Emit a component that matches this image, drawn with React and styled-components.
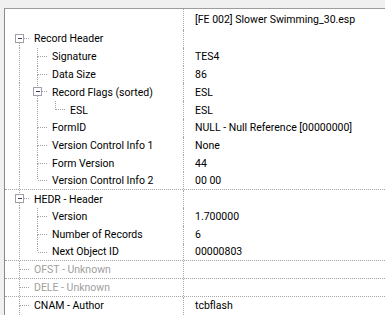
import React from 'react'
import styled, { createGlobalStyle } from 'styled-components'

const GlobalStyle = createGlobalStyle`
  html, body {
    margin: 0;
    padding: 0;
    background: #f0f0f0;
    overflow: hidden;
  }
`

const Container = styled.div`
  height: 315px;
  padding: 8px 0 0 4px;
  box-sizing: border-box;
  font-family: Roboto, "Open Sans", sans-serif;
  font-size: 10.5px;
  color: #000;
`

const Panel = styled.div`
  height: 100%;
  background: #fff;
  border-top: 1px solid #9c9c9c;
  border-left: 1px solid #8a8a8a;
  overflow: hidden;
`

const Row = styled.div`
  display: grid;
  grid-template-columns: 179px 1fr;
  grid-template-rows: 100%;
  height: ${p => (p.$head ? '21px' : '17.8px')};
  box-sizing: border-box;
  border-bottom: ${p => (p.$sep ? '1px dotted #a6a6a6' : 'none')};
`

const NameCell = styled.div`
  display: flex;
  align-items: stretch;
  height: 100%;
  min-height: 0;
  padding-left: 5px;
  border-right: 1px dotted #a6a6a6;
  overflow: hidden;
`

const Label = styled.span`
  display: flex;
  align-items: center;
  padding-left: 6px;
  white-space: nowrap;
  color: ${p => (p.$muted ? '#a0a0a0' : '#000')};
`

const ValueCell = styled.div`
  display: flex;
  align-items: center;
  padding-left: 11px;
  white-space: nowrap;
  min-height: 0;
`

const Gutter = styled.svg`
  flex: none;
  width: 18px;
  height: 100%;
  overflow: visible;
`

const dash = { stroke: '#a0a0a0', strokeWidth: 1, strokeDasharray: '1 1', shapeRendering: 'crispEdges' }

const Guide = ({ on }) => (
  <Gutter>
    {on && <line x1="9.5" y1="0" x2="9.5" y2="100%" style={dash} />}
  </Gutter>
)

const Connector = ({ up, down, box }) => (
  <Gutter>
    {up && <line x1="9.5" y1="0" x2="9.5" y2="50%" style={dash} />}
    {down && <line x1="9.5" y1="50%" x2="9.5" y2="100%" style={dash} />}
    <line x1={box ? 14 : 9.5} y1="50%" x2="20" y2="50%" style={dash} />
    {box && (
      <svg y="50%" overflow="visible">
        <rect x="5.5" y="-4.5" width="8" height="8" fill="#fff" stroke="#a0a0ac" shapeRendering="crispEdges" />
        <line x1="7.5" y1="-0.5" x2="12" y2="-0.5" stroke="#3c3c64" shapeRendering="crispEdges" />
      </svg>
    )}
  </Gutter>
)

const tree = [
  {
    label: 'Record Header',
    children: [
      { label: 'Signature', value: 'TES4' },
      { label: 'Data Size', value: '86' },
      { label: 'Record Flags (sorted)', value: 'ESL', children: [{ label: 'ESL', value: 'ESL' }] },
      { label: 'FormID', value: 'NULL - Null Reference [00000000]' },
      { label: 'Version Control Info 1', value: 'None' },
      { label: 'Form Version', value: '44' },
      { label: 'Version Control Info 2', value: '00 00' },
    ],
  },
  {
    label: 'HEDR - Header',
    children: [
      { label: 'Version', value: '1.700000' },
      { label: 'Number of Records', value: '6' },
      { label: 'Next Object ID', value: '00000803' },
    ],
  },
  { label: 'OFST - Unknown', muted: true },
  { label: 'DELE - Unknown', muted: true },
  { label: 'CNAM - Author', value: 'tcbflash', more: true },
]

// flatten the tree into visible rows with their connector info
const flatten = (nodes, depth = 0, guides = [], out = []) => {
  nodes.forEach((n, i) => {
    const last = i === nodes.length - 1 && !n.more
    out.push({
      ...n,
      guides,
      up: !(depth === 0 && i === 0),
      down: !last,
      box: !!n.children,
    })
    if (n.children) flatten(n.children, depth + 1, [...guides, !last], out)
    if (depth === 0 && !n.more) out[out.length - 1].sep = true
  })
  return out
}

const rows = flatten(tree)

export default function App() {
  return (
    <Container>
      <GlobalStyle />
      <Panel>
        <Row $head>
          <NameCell />
          <ValueCell>[FE 002] Slower Swimming_30.esp</ValueCell>
        </Row>
        {rows.map((r, i) => (
          <Row key={i} $sep={r.sep}>
            <NameCell>
              {r.guides.map((g, j) => <Guide key={j} on={g} />)}
              <Connector up={r.up} down={r.down} box={r.box} />
              <Label $muted={r.muted}>{r.label}</Label>
            </NameCell>
            <ValueCell>{r.value}</ValueCell>
          </Row>
        ))}
      </Panel>
    </Container>
  )
}
